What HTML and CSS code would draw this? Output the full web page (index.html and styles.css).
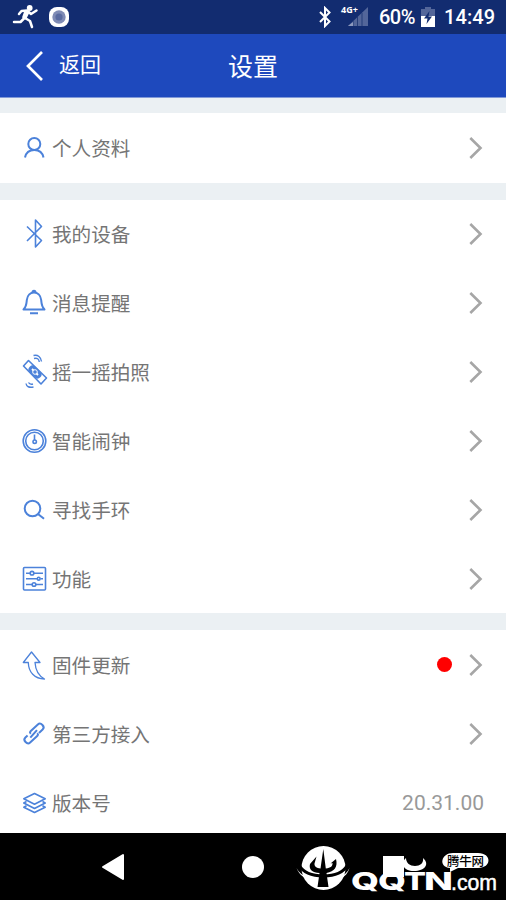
FILE: index.html
```
<!DOCTYPE html>
<html lang="zh-CN">
<head>
<meta charset="utf-8">
<title>设置</title>
<link rel="stylesheet" href="styles.css">
</head>
<body>
<svg class="defs" aria-hidden="true"><symbol id="chevron" viewBox="0 0 16 24"><path d="M2.3 2 12.500 12 2.3 22" fill="none" stroke="currentColor" stroke-width="2.600"/></symbol></svg>
<div class="screen">
  <div class="status">
    <svg class="runner" viewBox="12 3 28 28"><circle cx="29.700" cy="8" r="2.900" fill="#fff"/><path d="M19 14 21.500 11 27 10.500 31 14 36.500 10.500M27 12 24 18.500 20.500 22 14 22M25 18 30 21 32 27" fill="none" stroke="#fff" stroke-width="2.500" stroke-linecap="round" stroke-linejoin="round"/><path d="m24.500 10.500 5 2-3.500 7-4-2z" fill="#fff"/></svg>
    <svg class="record" viewBox="0 0 22 22"><rect x="1" y="1" width="20" height="20" rx="8" fill="#fff"/><circle cx="11" cy="11" r="6.700" fill="#7f8bb5"/><circle cx="11" cy="11" r="3.600" fill="#596aa0"/></svg>
    <span class="space"></span>
    <svg class="bt" viewBox="0 0 14 22"><path d="m2 6 9.500 9.500L7 20V2l4.500 4.500L2 16" fill="none" stroke="#fff" stroke-width="2"/></svg>
    <div class="signal"><svg viewBox="0 0 20 20"><path d="M0 19 20 0V19z" fill="#53669a"/><path d="M5 19v-5M9.500 19V10M14 19V6" stroke="#253d78"/><path d="M0 19l5-4v4z" fill="#8c99bd"/></svg><span>4G+</span></div>
    <span class="percent">60%</span>
    <svg class="battery" viewBox="0 0 14 20"><path d="M0 2h4V0h6v2h4v8H0z" fill="#53669a"/><path d="M0 9h14v11H0z" fill="#fff"/><path d="M8.500 4 3 11.500h3.500L5.500 17 11 9.500H7.500z" fill="#122c70"/></svg>
    <span class="time">14:49</span>
  </div>
  <header>
    <div class="back"><svg viewBox="0 0 20 32"><path d="M17 2 3 16l14 14" fill="none" stroke="#fff" stroke-width="2.700"/></svg><span>返回</span></div>
    <h1>设置</h1>
  </header>
  <main>
    <section class="profile">
      <div class="row"><svg class="icon bold" viewBox="19 -18 30 36"><circle cx="34.300" cy="-4" r="6"/><path d="M25 9.500C26 4.500 29.500 2 34.300 2s8.200 2.500 9.200 7.500"/></svg><span class="label">个人资料</span><svg class="arrow"><use href="#chevron"/></svg></div>
    </section>
    <section class="device">
      <div class="row"><svg class="icon" viewBox="19 -18 30 36"><path d="M27-7.500 41.500 6.500 35.500 13v-27l6 6.500L27 7"/></svg><span class="label">我的设备</span><svg class="arrow"><use href="#chevron"/></svg></div>
      <div class="row"><svg class="icon bold" viewBox="19 -18 30 36"><path d="M23.500 6.500c3-3 3-6 3.300-9.500.5-5 3.700-7.500 7.200-7.500s6.700 2.500 7.200 7.500c.3 3.500.3 6.500 3.300 9.500zM32.500-10.500c-.5-2.500 3.500-2.500 3 0M30 10.300h8"/></svg><span class="label">消息提醒</span><svg class="arrow"><use href="#chevron"/></svg></div>
      <div class="row"><svg class="icon" viewBox="19 -18 30 36"><path d="M28.500-11.500 46.500 6 41 12 23.500-6z"/><rect x="27.500" y="-4" width="15" height="8" rx="4" transform="rotate(45 35 0)" fill="#4c82da" stroke="none"/><path d="m32-3 1.500 1.500m3 3L38 3" stroke="#fff" stroke-width="1.800"/><circle cx="35" cy="0" r="2.300" stroke="#fff" stroke-width="1"/><path d="M34-13.500c3-1 5 .5 5.300 3.500M33.500-16.500c4.500-1 7.500 1.500 8 6M26 11.500c.5 3 3 4.500 7.500 3.500M28.500 10.500c.8 1.500 2.500 2 4.500 1.500" stroke-width="1.400"/></svg><span class="label">摇一摇拍照</span><svg class="arrow"><use href="#chevron"/></svg></div>
      <div class="row"><svg class="icon" viewBox="19 -18 30 36"><circle cx="34.500" cy="0" r="11.300"/><circle cx="34.500" cy="0" r="8.800"/><path d="M34.500-6.500V-1"/><circle cx="34.700" cy="0.700" r="1.700"/></svg><span class="label">智能闹钟</span><svg class="arrow"><use href="#chevron"/></svg></div>
      <div class="row"><svg class="icon bold" viewBox="19 -18 30 36"><circle cx="32.500" cy="-1.500" r="7.800"/><path d="m38 4 6 4.800"/></svg><span class="label">寻找手环</span><svg class="arrow"><use href="#chevron"/></svg></div>
      <div class="row"><svg class="icon" viewBox="19 -18 30 36"><rect x="23.500" y="-11.500" width="22" height="22.500" rx="1"/><path d="M26-5.800h4m4 0h9M26-.3h11m3.500 0H43M26 5.500h6m4 0h7" stroke-width="1.400"/><circle cx="32" cy="-5.800" r="1.800"/><circle cx="38.700" cy="-.3" r="1.400"/><circle cx="34" cy="5.500" r="1.800"/></svg><span class="label">功能</span><svg class="arrow"><use href="#chevron"/></svg></div>
    </section>
    <section class="about">
      <div class="row"><svg class="icon" viewBox="19 -18 30 36"><path d="m31.500-13-8.200 10.500h5C28.500 7 34.500 14 44.500 14 38 10.500 35.500 5 35-2.500h5z" stroke-width="1.300"/></svg><span class="label">固件更新</span><span class="dot"></span><svg class="arrow"><use href="#chevron"/></svg></div>
      <div class="row"><svg class="icon bold" viewBox="19 -18 30 36"><g transform="rotate(-43 34 -.5)"><path d="M31.500-2.500v-.5q0-1.500 1.500-1.500h10q3 0 3 3.500t-3 3.500h-5M36.500 1.500v.5q0 1.500-1.500 1.500H25q-3 0-3-3.500t3-3.500h3M28.500 0l10-1"/></g></svg><span class="label">第三方接入</span><svg class="arrow"><use href="#chevron"/></svg></div>
      <div class="row"><svg class="icon" viewBox="19 -18 30 36"><path d="m34.500-9.500 10.700 5.300-10.700 5.500-10.700-5.500zM26.500-1.500 23.800 0l10.700 5.500L45.200 0l-2.700-1.500M26.500 2.700l-2.700 1.500 10.700 5.300 10.700-5.300-2.700-1.500"/></svg><span class="label">版本号</span><span class="version">20.31.00</span></div>
    </section>
  </main>
  <nav>
    <svg class="nav-back" viewBox="0 0 24 28"><path d="M22 2v24L2 14z" fill="#fff" stroke="#fff" stroke-width="2" stroke-linejoin="round"/></svg>
    <span class="home"></span>
    <span class="recent"></span>
    <div class="watermark">
      <svg viewBox="296 842 210 58"><circle cx="323.500" cy="868" r="22" fill="#fff"/><path d="M299 865c5 9 14 11 24.500 11s19-2 24-11" fill="none" stroke="#000" stroke-width="3"/><path d="M296.500 868c5 9.500 15 11.500 27 11.500s21.500-2 26-11.500c-3 10-12 14-26 14s-23-4-27-14z" fill="#fff"/><path d="m323.300 849 2.500 19.500c5-.5 7-2.500 6.700-5.500l-2 .5 5.500-4.500c2 8-1.500 12.500-9.500 14l2 14h-11l2-14c-7-.5-11-3-9.500-9l6.500-7.500-2 7c-.3 3 2 4.500 6 5z" fill="#000"/><path d="M406 858c-6 5-3 13 8 13s16-7 9-13c1 5-3 8-8 8s-9-3-9-8z" fill="#fff"/><path d="M453 853h25c14 0 14 15 0 15h-20l-8 4v-4c-12-1-9-15 3-15z" fill="#fff"/><g class="brand"><text x="351" y="890" textLength="28" lengthAdjust="spacingAndGlyphs">Q</text><text x="378" y="890" textLength="28" lengthAdjust="spacingAndGlyphs">Q</text><text x="404" y="890" textLength="22" lengthAdjust="spacingAndGlyphs">T</text><text x="424" y="890" textLength="29" lengthAdjust="spacingAndGlyphs">N</text></g><text class="domain" x="451" y="890" textLength="46" lengthAdjust="spacingAndGlyphs">.com</text><text class="badge" x="447" y="866" textLength="37">腾牛网</text></svg>
    </div>
  </nav>
</div>
</body>
</html>
```
FILE: styles.css
```
* { box-sizing: border-box; }
body { margin: 0; font-family: Roboto, "Noto Sans CJK SC", sans-serif; }
.defs { position: absolute; width: 0; height: 0; }
.screen { width: 506px; height: 900px; display: flex; flex-direction: column; overflow: hidden; background: #ebf0f3; }
.status { height: 34px; flex: none; display: flex; align-items: center; padding: 0 11px 0 12px; background: #122c70; color: #fff; }
.runner { width: 28px; height: 28px; }
.record { width: 22px; height: 22px; margin-left: 8px; }
.space { flex: 1; }
.bt { width: 14px; height: 22px; margin-right: 9px; }
.signal { position: relative; width: 27px; height: 20px; display: flex; justify-content: flex-end; }
.signal svg { width: 20px; height: 20px; }
.signal span { position: absolute; left: 0; top: -3px; font: 700 9px/12px "Open Sans", sans-serif; }
.percent { width: 37px; margin-left: 11px; font-size: 20px; font-weight: 500; letter-spacing: -.5px; white-space: nowrap; }
.battery { width: 14px; height: 20px; margin-left: 5px; }
.time { width: 51px; margin-left: 9px; font-size: 20px; font-weight: 500; letter-spacing: .1px; white-space: nowrap; }
header { height: 64px; flex: none; display: grid; grid-template-columns: 1fr auto 1fr; align-items: center; background: #1e49bd; color: #fff; border-bottom: 1px solid #8199d7; }
.back { display: flex; align-items: center; padding-left: 25px; font-size: 21px; gap: 14px; }
.back svg { width: 20px; height: 32px; }
.back span { line-height: 30px; padding-bottom: 1px; }
h1 { margin: 0; padding-top: 5px; font-size: 25px; line-height: 36px; font-weight: 400; }
main { height: 735px; flex: none; display: flex; flex-direction: column; gap: 17px; padding-top: 15px; overflow: hidden; }
section { flex: none; background: #fff; }
.profile { height: 70px; }
.device { height: 413px; display: grid; grid-template-rows: repeat(6, 1fr); }
.about { height: 207px; }
.row { height: 69px; display: flex; align-items: center; padding: 0 22px 0 19px; }
.device .row { height: auto; min-height: 0; }
.icon { width: 30px; height: 36px; flex: none; fill: none; stroke: #4c82da; stroke-width: 1.6; stroke-linejoin: round; }
.bold { stroke-width: 2; }
.label { flex: 1; margin-left: 3px; padding-top: 4px; font-size: 19.6px; line-height: 30px; color: #757575; }
.arrow { width: 16px; height: 24px; color: #a6a6a6; }
.dot { width: 15px; height: 15px; margin-right: 16px; border-radius: 50%; background: #f00; }
.version { font-size: 21px; color: #999; }
nav { position: relative; height: 67px; flex: none; display: flex; align-items: center; background: #000; }
.nav-back { width: 24px; height: 28px; margin-left: 101px; }
.home { width: 22px; height: 22px; margin-left: 117px; border-radius: 50%; background: #fff; }
.recent { width: 21px; height: 21px; margin-left: 119px; background: #fff; }
.watermark { position: absolute; right: 0; bottom: 0; width: 210px; height: 58px; }
.watermark svg { display: block; width: 210px; height: 58px; }
.brand { font: 800 24.5px Inter, Roboto, sans-serif; fill: #fff; }
.domain { font: 400 22px "Liberation Sans", sans-serif; fill: #fff; stroke: #fff; stroke-width: .5; }
.badge { font: 500 12.5px "Noto Sans CJK SC", sans-serif; fill: #000; }
```
